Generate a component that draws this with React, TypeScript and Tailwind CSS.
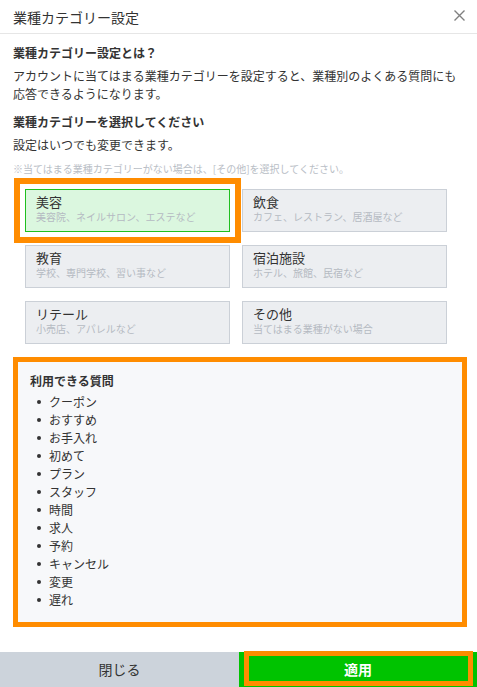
import React from "react";

const categories = [
  { title: "美容", sub: "美容院、ネイルサロン、エステなど", selected: true },
  { title: "飲食", sub: "カフェ、レストラン、居酒屋など" },
  { title: "教育", sub: "学校、専門学校、習い事など" },
  { title: "宿泊施設", sub: "ホテル、旅館、民宿など" },
  { title: "リテール", sub: "小売店、アパレルなど" },
  { title: "その他", sub: "当てはまる業種がない場合" },
];

const questions = [
  "クーポン",
  "おすすめ",
  "お手入れ",
  "初めて",
  "プラン",
  "スタッフ",
  "時間",
  "求人",
  "予約",
  "キャンセル",
  "変更",
  "遅れ",
];

export default function App() {
  return (
    <div
      className="w-[477px] h-[687px] bg-white flex flex-col text-[#333] overflow-hidden"
      style={{ fontFamily: '"Noto Sans CJK JP", "Noto Sans", sans-serif' }}
    >
      {/* Header */}
      <div className="h-[34px] shrink-0 border-b border-[#e6e6e6] flex items-center justify-between pl-[13px] pr-[12px]">
        <span className="text-[14px] leading-[18px] text-[#333]">業種カテゴリー設定</span>
        <svg width="11" height="11" viewBox="0 0 11 11" className="mb-[2px]">
          <path d="M0.5 0.5 L10.5 10.5 M10.5 0.5 L0.5 10.5" stroke="#808080" strokeWidth="1.4" />
        </svg>
      </div>

      {/* Body */}
      <div className="flex-1 flex flex-col pl-[13px] pr-[10px]">
        <div className="mt-[10px] text-[12px] leading-[18px] font-bold">業種カテゴリー設定とは？</div>
        <p className="mt-[5px] text-[12px] leading-[18px]">
          アカウントに当てはまる業種カテゴリーを設定すると、業種別のよくある質問にも応答できるようになります。
        </p>
        <div className="mt-[10px] text-[12px] leading-[18px] font-bold">業種カテゴリーを選択してください</div>
        <div className="mt-[5px] text-[12px] leading-[18px]">設定はいつでも変更できます。</div>
        <div className="mt-[8px] text-[10px] leading-[14px] text-[#b9bec6]">
          ※当てはまる業種カテゴリーがない場合は、[その他]を選択してください。
        </div>

        <div className="mt-[13px] pl-[12px] grid grid-cols-[205px_205px] gap-x-[12px] gap-y-[13px]">
          {categories.map((c) => (
            <div
              key={c.title}
              className={
                c.selected
                  ? "h-[43px] border border-[#1fbf1f] bg-[#dbf7df] pl-[10px] pt-[4px] outline-[6px] outline-solid outline-[#ff8c00] outline-offset-[5px]"
                  : "h-[43px] border border-[#cbd0d7] bg-[#eceef1] pl-[10px] pt-[4px]"
              }
            >
              <div className="text-[13px] leading-[16px] text-[#333]">{c.title}</div>
              <div className="text-[10px] leading-[14px] text-[#b5bac2]">{c.sub}</div>
            </div>
          ))}
        </div>

        <div className="mt-[13px] w-[454px] h-[270px] border-[5px] border-[#ff8c00] bg-[#f7f8fa] pl-[12px] pt-[10px]">
          <div className="text-[12px] leading-[18px] font-bold text-[#333]">利用できる質問</div>
          <ul className="mt-[3px]">
            {questions.map((q) => (
              <li key={q} className="flex items-center h-[18px] text-[12px] leading-[18px] text-[#333]">
                <span className="ml-[7px] w-[4px] h-[4px] rounded-full bg-[#333] shrink-0" />
                <span className="ml-[8px]">{q}</span>
              </li>
            ))}
          </ul>
        </div>
      </div>

      {/* Footer */}
      <div className="h-[35px] shrink-0 flex relative">
        <button className="w-[239px] h-full bg-[#ccd3db] text-[14px] text-[#333] flex items-center justify-center">
          閉じる
        </button>
        <button className="flex-1 h-full bg-[#00c300] text-[14px] font-bold text-white flex items-center justify-center">
          適用
        </button>
        <div className="absolute left-[244px] top-[-1px] w-[229px] h-[35px] border-[5px] border-[#ff8c00] pointer-events-none" />
      </div>
    </div>
  );
}
